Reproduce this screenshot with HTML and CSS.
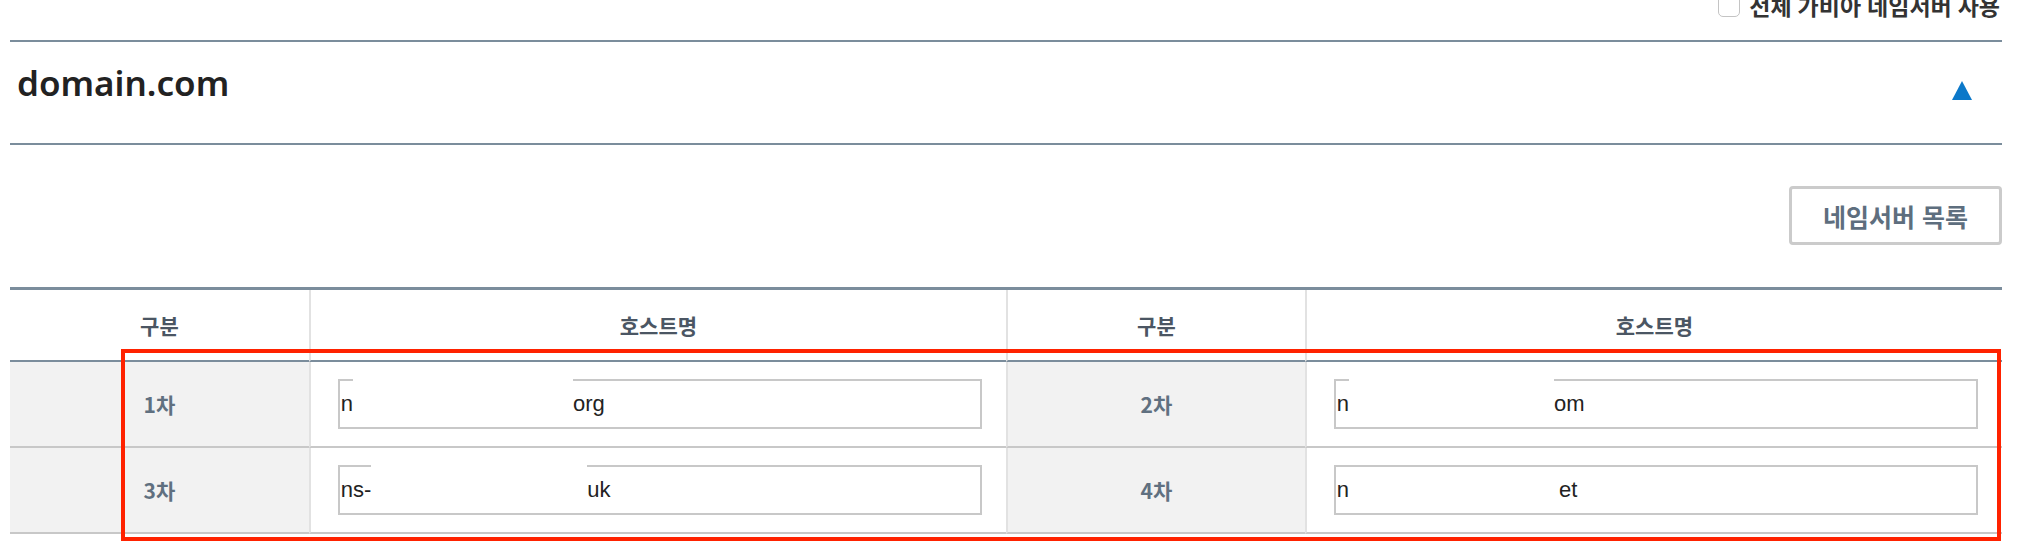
FILE: index.html
```html
<!DOCTYPE html>
<html lang="ko">
<head>
    <meta charset="UTF-8">
    <meta name="viewport" content="width=device-width, initial-scale=1.0">
    <title>네임서버 설정</title>
    <link rel="stylesheet" href="styles.css">
</head>
<body>
    <div class="top-bar">
        <label class="check-label">
            <span class="check-box"></span>
            전체 가비아 네임서버 사용
        </label>
    </div>

    <div class="domain-head">
        <h2 class="domain-name">domain.com</h2>
        <svg class="toggle" width="20" height="19" viewBox="0 0 20 19">
            <polygon points="10,0 20,19 0,19" fill="#0b78c9"/>
        </svg>
    </div>

    <div class="actions">
        <button class="list-btn" type="button">네임서버 목록</button>
    </div>

    <div class="table-wrap">
        <table class="ns-table">
            <colgroup>
                <col class="col-label">
                <col class="col-host">
                <col class="col-label">
                <col class="col-host">
            </colgroup>
            <thead>
                <tr>
                    <th>구분</th>
                    <th>호스트명</th>
                    <th>구분</th>
                    <th>호스트명</th>
                </tr>
            </thead>
            <tbody>
                <tr>
                    <td class="label">1차</td>
                    <td class="host">
                        <div class="field"><span>n</span><span class="redact r1"></span><span>org</span></div>
                    </td>
                    <td class="label">2차</td>
                    <td class="host">
                        <div class="field"><span>n</span><span class="redact r2"></span><span>om</span></div>
                    </td>
                </tr>
                <tr>
                    <td class="label">3차</td>
                    <td class="host">
                        <div class="field"><span>ns-</span><span class="redact r3"></span><span>uk</span></div>
                    </td>
                    <td class="label">4차</td>
                    <td class="host">
                        <div class="field"><span>n</span><span class="redact r4 inner"></span><span>et</span></div>
                    </td>
                </tr>
            </tbody>
        </table>
        <div class="highlight"></div>
    </div>
</body>
</html>
```

FILE: styles.css
```css
html {
    background-color: #fff;
}

body {
    margin: 0;
    padding: 0 22px 40px 10px;
    font-family: "Noto Sans", "Noto Sans CJK KR", sans-serif;
    background-color: #fff;
    color: #222;
}

.top-bar {
    display: flex;
    justify-content: flex-end;
    align-items: center;
    height: 30px;
    margin-top: -9px;
    margin-bottom: 19px;
}

.check-label {
    display: flex;
    align-items: center;
    gap: 9px;
    font-size: 23px;
    line-height: 23px;
    font-weight: 700;
    color: #333;
    padding-right: 2px;
}

.check-box {
    width: 20px;
    height: 20px;
    border: 1px solid #c4c4c4;
    border-radius: 5px;
    background-color: #fff;
}

.domain-head {
    display: flex;
    justify-content: space-between;
    align-items: flex-start;
    height: 101px;
    border-top: 2px solid #7b8d9c;
    border-bottom: 2px solid #7b8d9c;
    padding: 0 30px 0 7px;
}

.domain-name {
    margin: 21px 0 0;
    font-size: 35px;
    line-height: 40px;
    font-weight: 600;
    color: #222;
}

.toggle {
    margin-top: 39px;
}

.actions {
    display: flex;
    justify-content: flex-end;
    padding: 41px 0 42px;
}

.list-btn {
    width: 213px;
    height: 59px;
    border: 3px solid #cbcbcb;
    border-radius: 4px;
    background-color: #fff;
    font-family: "Noto Sans CJK KR", sans-serif;
    font-size: 25px;
    font-weight: 700;
    color: #5e6e7e;
    cursor: pointer;
}

.table-wrap {
    position: relative;
}

.ns-table {
    width: 100%;
    border-collapse: separate;
    border-spacing: 0;
    border-top: 3px solid #7b8d9c;
    table-layout: fixed;
}

.col-label {
    width: 15%;
}

.col-host {
    width: 35%;
}

.ns-table th {
    height: 70px;
    padding: 0;
    font-family: "Noto Sans CJK KR", sans-serif;
    font-size: 21px;
    font-weight: 700;
    color: #4b5663;
    border-bottom: 2px solid #7b8d9c;
}

.ns-table th + th,
.ns-table td + td {
    border-left: 2px solid #e2e2e2;
}

.ns-table td {
    height: 84px;
    padding: 0;
    border-bottom: 2px solid #c8c8c8;
}

.ns-table .label {
    background-color: #f2f2f2;
    text-align: center;
    font-family: "Noto Sans CJK KR", sans-serif;
    font-size: 21px;
    font-weight: 700;
    color: #607080;
}

.ns-table .host {
    padding: 0 24px 0 27px;
}

.field {
    display: flex;
    align-items: center;
    height: 46px;
    padding: 0 1px;
    border: 2px solid #c8c8c8;
    background-color: #fff;
    font-family: "Liberation Sans", Arial, sans-serif;
    font-size: 22px;
    color: #222;
}

.redact {
    align-self: flex-start;
    height: 42px;
    margin-top: -2px;
    background-color: #fff;
}

.redact.inner {
    margin-top: 0;
}

.r1 {
    width: 220px;
}

.r2 {
    width: 205px;
}

.r3 {
    width: 216px;
}

.r4 {
    width: 210px;
}

.highlight {
    position: absolute;
    top: 62px;
    left: 111px;
    right: 1px;
    height: 184px;
    border: 4px solid #ff2200;
}
```
